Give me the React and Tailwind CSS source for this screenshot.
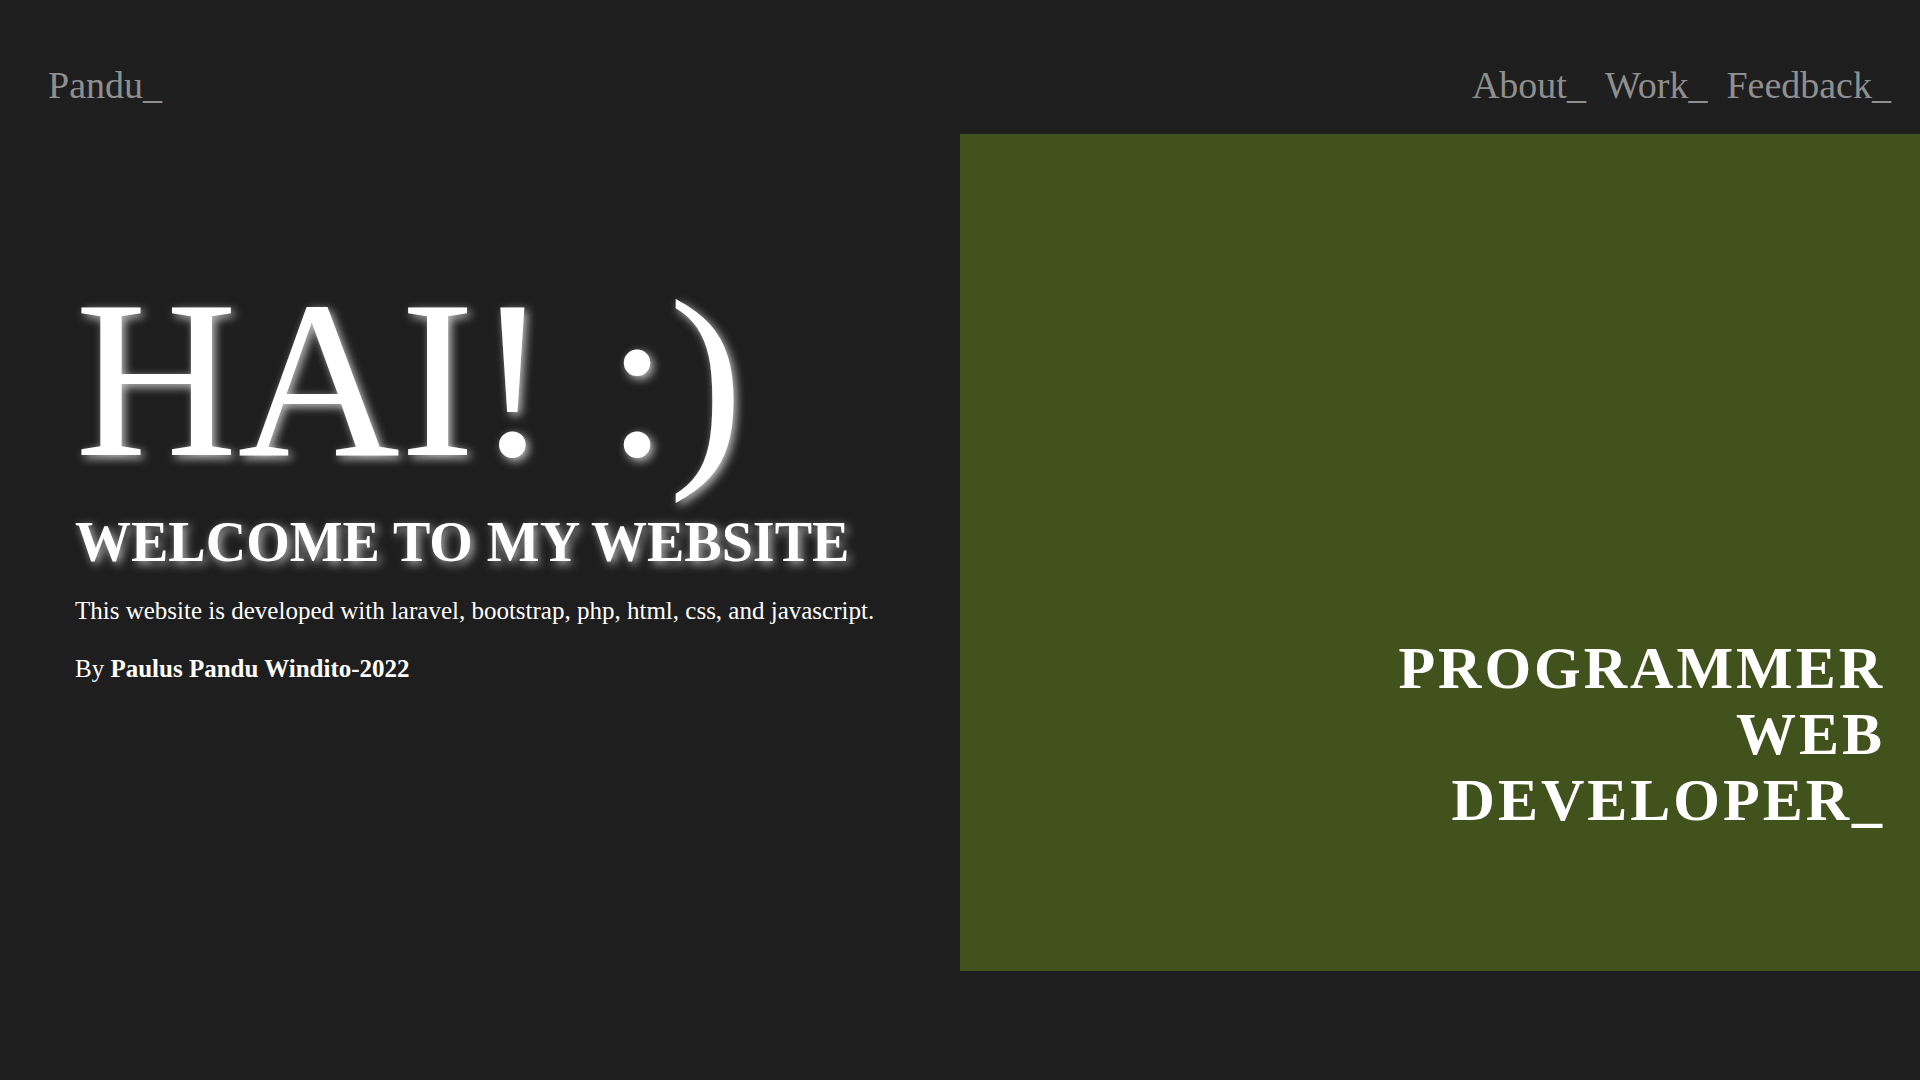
import React from 'react'

// Landing page: navbar, greeting on the left, green role panel on the right
const navLinks = ['About_', 'Work_', 'Feedback_']

function Navbar() {
  return (
    <header className="flex h-[134px] items-start justify-between pt-[64px] pl-[48px] pr-[29px] text-[38px] leading-[42px] text-[#8f8f8f]">
      <a href="#" className="hover:text-white">Pandu_</a>
      <nav className="flex gap-[19px]">
        {navLinks.map((link) => (
          <a key={link} href="#" className="hover:text-white">
            {link}
          </a>
        ))}
      </nav>
    </header>
  )
}

function Intro() {
  return (
    <section className="w-1/2 pl-[75px] pt-[132px] text-white">
      <h1 className="text-[225px] font-normal leading-[226px] whitespace-nowrap [text-shadow:3px_3px_10px_rgba(255,255,255,0.75)]">
        HAI! :)
      </h1>
      <h2 className="mt-[22px] text-[56px] font-bold leading-[56px] whitespace-nowrap [text-shadow:3px_3px_10px_rgba(255,255,255,0.7)]">
        WELCOME TO MY WEBSITE
      </h2>
      <p className="mt-[23px] text-[25px] leading-[36px]">
        This website is developed with laravel, bootstrap, php, html, css, and javascript.
      </p>
      <p className="mt-[22px] text-[25px] leading-[36px]">
        By <b className="font-bold">Paulus Pandu Windito-2022</b>
      </p>
    </section>
  )
}

function RolePanel() {
  return (
    <section className="flex h-[837px] w-1/2 flex-col justify-end bg-[#42521d] pb-[138px] pr-[35px]">
      <h3 className="text-right text-[60px] font-bold leading-[66px] tracking-[3px] text-white">
        PROGRAMMER
        <br />
        WEB
        <br />
        DEVELOPER_
      </h3>
    </section>
  )
}

export default function App() {
  return (
    <div className="min-h-screen bg-[#1e1e1e] font-['Liberation_Serif','Times_New_Roman',serif]">
      <Navbar />
      <main className="flex">
        <Intro />
        <RolePanel />
      </main>
    </div>
  )
}
